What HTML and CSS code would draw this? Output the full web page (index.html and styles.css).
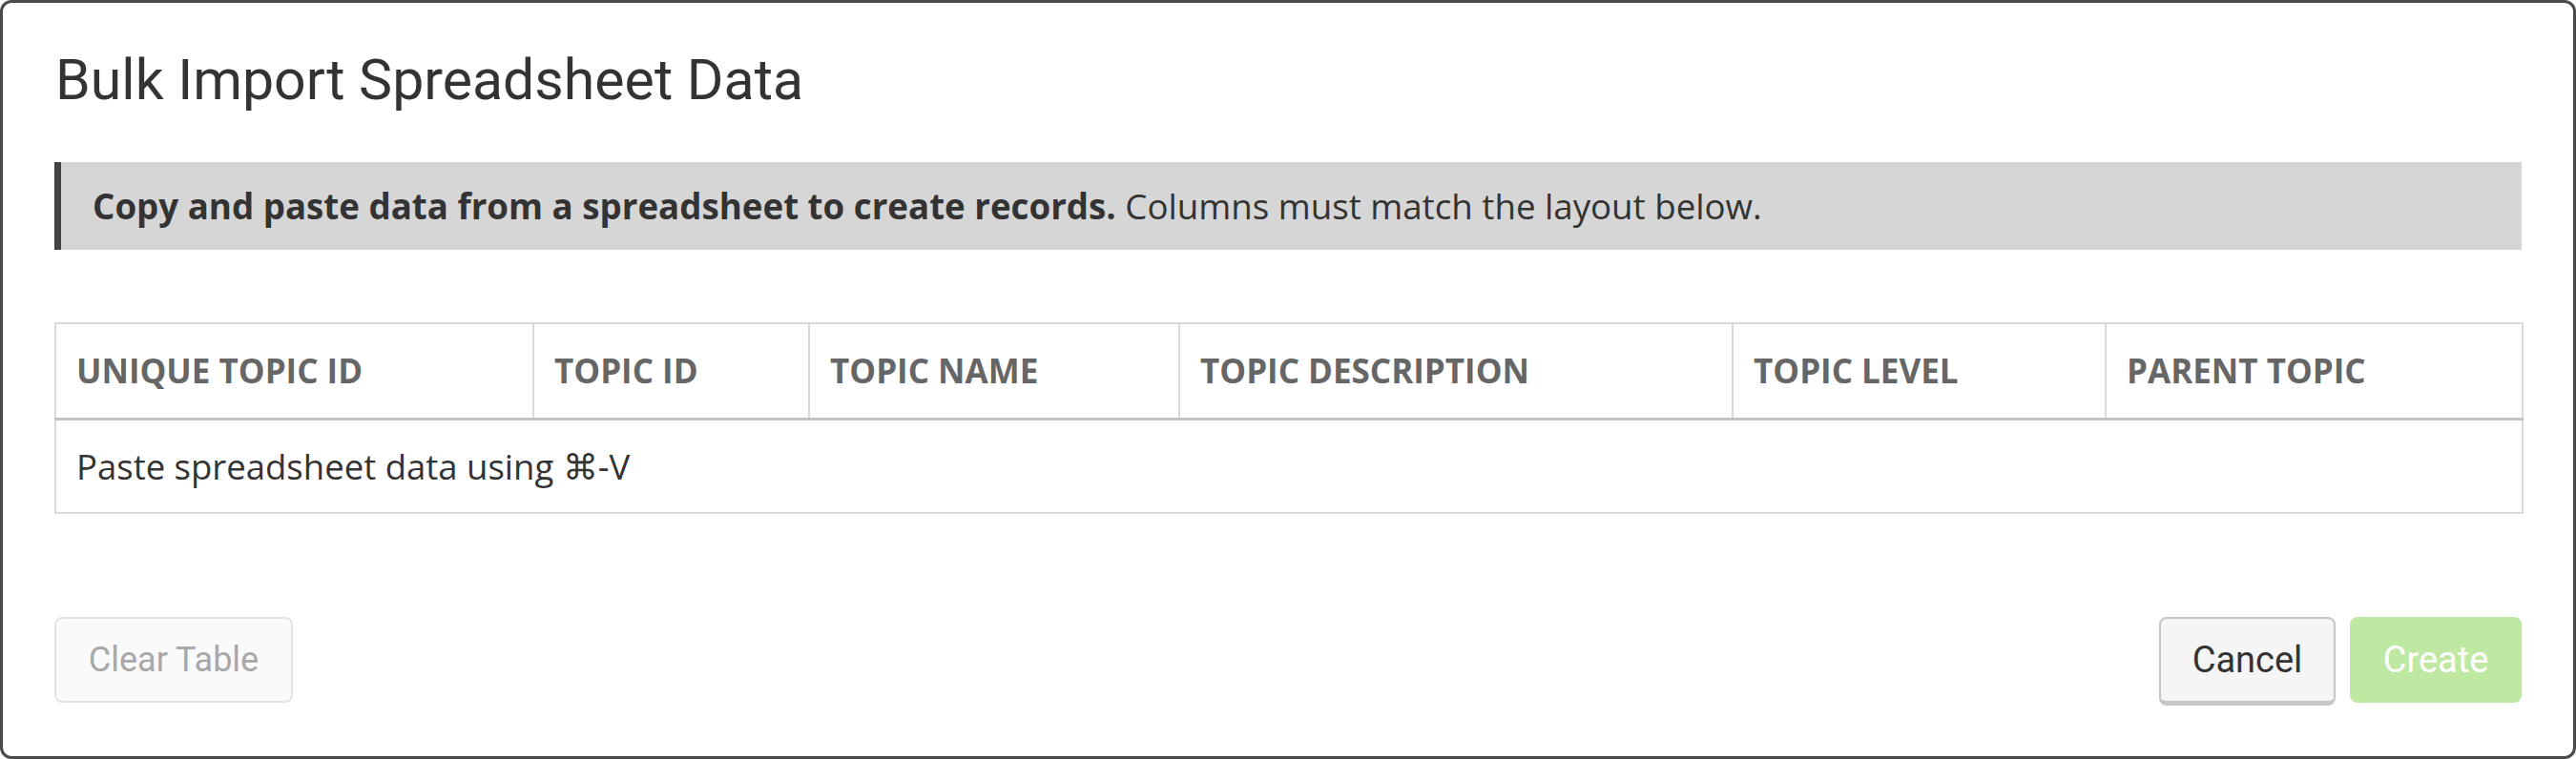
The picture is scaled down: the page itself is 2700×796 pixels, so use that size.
FILE: index.html
```html
<!DOCTYPE html>
<html lang="en">
<head>
<meta charset="utf-8">
<title>Bulk Import Spreadsheet Data</title>
<link rel="stylesheet" href="styles.css">
</head>
<body>
<div class="modal">
  <h1 class="modal-title">Bulk Import Spreadsheet Data</h1>
  <div class="notice"><p class="notice-text"><strong>Copy and paste data from a spreadsheet to create records.</strong> Columns must match the layout below.</p></div>
  <table class="import-table">
    <colgroup>
      <col class="col-unique">
      <col class="col-id">
      <col class="col-name">
      <col class="col-desc">
      <col class="col-level">
      <col class="col-parent">
    </colgroup>
    <thead>
      <tr>
        <th>Unique Topic ID</th>
        <th>Topic ID</th>
        <th>Topic Name</th>
        <th>Topic Description</th>
        <th>Topic Level</th>
        <th>Parent Topic</th>
      </tr>
    </thead>
    <tbody>
      <tr>
        <td colspan="6" class="paste-hint">Paste spreadsheet data using ⌘-V</td>
      </tr>
    </tbody>
  </table>
  <div class="actions">
    <button class="btn btn-clear" type="button">Clear Table</button>
    <div class="actions-right">
      <button class="btn btn-cancel" type="button">Cancel</button>
      <button class="btn btn-create" type="button">Create</button>
    </div>
  </div>
</div>
</body>
</html>
```
FILE: styles.css
```css
* { box-sizing: border-box; }
html, body {
  margin: 0;
  padding: 0;
  background: #ffffff;
}
body {
  font-family: "Open Sans", Roboto, "Liberation Sans", sans-serif;
  color: #333333;
}
.modal {
  width: 2700px;
  height: 796px;
  border: 3px solid #4a4a4a;
  border-radius: 12px;
  background: #ffffff;
  padding: 45px 54px 0 54px;
  display: flex;
  flex-direction: column;
}
.modal-title {
  margin: 0;
  font-family: Roboto, "Liberation Sans", sans-serif;
  font-size: 59px;
  line-height: 71px;
  font-weight: 400;
  color: #333333;
  padding-left: 1px;
}
.notice {
  margin-top: 51px;
  height: 92px;
  background: #d6d6d6;
  border-left: 7px solid #444444;
  display: flex;
  align-items: center;
  padding-left: 33px;
}
.notice-text {
  margin: 0;
  font-size: 36.7px;
  line-height: 44px;
  color: #333333;
}
.notice-text strong { font-weight: 700; }
.import-table {
  margin-top: 76px;
  width: 2586px;
  border-collapse: collapse;
  table-layout: fixed;
  border: 2px solid #d9d9d9;
}
.col-unique { width: 501px; }
.col-id { width: 289px; }
.col-name { width: 388px; }
.col-desc { width: 580px; }
.col-level { width: 391px; }
.col-parent { width: 437px; }
.import-table th {
  height: 100px;
  text-align: left;
  text-transform: uppercase;
  font-size: 35px;
  font-weight: 700;
  color: #666666;
  padding: 0 0 0 21px;
  border-right: 2px solid #d9d9d9;
  border-bottom: 3px solid #c2c2c2;
  white-space: nowrap;
}
.paste-hint {
  height: 99px;
  padding: 0 0 0 21px;
  font-size: 36.5px;
  color: #333333;
}
.actions {
  margin-top: 108px;
  display: flex;
  justify-content: space-between;
  align-items: flex-start;
}
.actions-right {
  display: flex;
  gap: 15px;
}
.btn {
  font-family: Roboto, "Liberation Sans", sans-serif;
  font-size: 38px;
  height: 90px;
  padding: 0;
  border-radius: 8px;
  white-space: nowrap;
  cursor: pointer;
}
.btn-clear {
  width: 250px;
  font-size: 36px;
  background: #fafafa;
  border: 2px solid #e3e3e3;
  color: #a8a8a8;
}
.btn-cancel {
  width: 185px;
  height: 93px;
  background: #f5f5f5;
  border: 2px solid #c6c6c6;
  border-bottom-width: 5px;
  color: #333333;
}
.btn-create {
  width: 180px;
  background: #bfe8a3;
  border: 0;
  color: #ffffff;
}
```
